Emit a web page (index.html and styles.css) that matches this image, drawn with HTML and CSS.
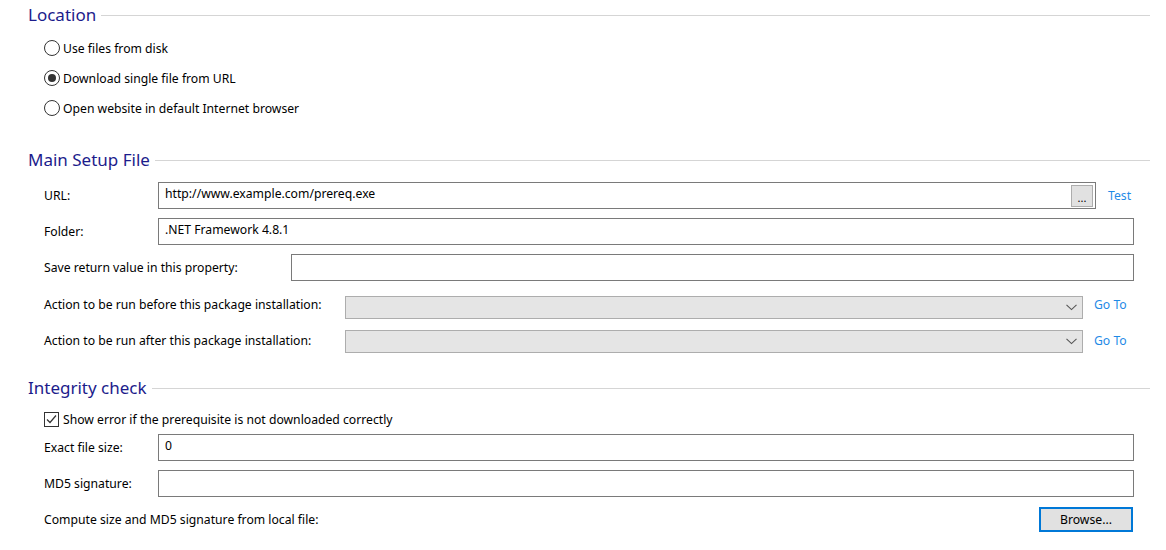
FILE: index.html
```html
<!DOCTYPE html>
<html>
<head>
<meta charset="utf-8">
<link rel="stylesheet" href="styles.css">
</head>
<body>
<div class="page">
  <div class="header"><span class="title">Location</span><span class="rule"></span></div>
  <div class="options">
    <label class="opt"><span class="radio"></span><span>Use files from disk</span></label>
    <label class="opt"><span class="radio on"></span><span>Download single file from URL</span></label>
    <label class="opt"><span class="radio"></span><span>Open website in default Internet browser</span></label>
  </div>

  <div class="header h2"><span class="title">Main Setup File</span><span class="rule"></span></div>
  <div class="row r-url">
    <span class="lbl w114">URL:</span>
    <div class="field"><span class="val">http://www.example.com/prereq.exe</span><span class="dots">...</span></div>
    <a class="link test">Test</a>
  </div>
  <div class="row r-gap9">
    <span class="lbl w114">Folder:</span>
    <div class="field"><span class="val">.NET Framework 4.8.1</span></div>
  </div>
  <div class="row r-gap9">
    <span class="lbl w247">Save return value in this property:</span>
    <div class="field"></div>
  </div>
  <div class="row sel r-act1">
    <span class="lbl w301">Action to be run before this package installation:</span>
    <div class="select"><svg class="chev" width="11" height="7" viewBox="0 0 11 7"><path d="M0.5 0.8 L5.5 5.6 L10.5 0.8" fill="none" stroke="#555" stroke-width="1.1"/></svg></div>
    <a class="link goto">Go To</a>
  </div>
  <div class="row sel r-act2">
    <span class="lbl w301">Action to be run after this package installation:</span>
    <div class="select"><svg class="chev" width="11" height="7" viewBox="0 0 11 7"><path d="M0.5 0.8 L5.5 5.6 L10.5 0.8" fill="none" stroke="#555" stroke-width="1.1"/></svg></div>
    <a class="link goto">Go To</a>
  </div>

  <div class="header h3"><span class="title">Integrity check</span><span class="rule"></span></div>
  <label class="row chk-row">
    <span class="check"><svg width="13" height="13" viewBox="0 0 13 13"><path d="M2 6.5 L5 9.5 L11 2.5" fill="none" stroke="#333" stroke-width="1.2"/></svg></span>
    <span>Show error if the prerequisite is not downloaded correctly</span>
  </label>
  <div class="row r-exact">
    <span class="lbl w114">Exact file size:</span>
    <div class="field"><span class="val">0</span></div>
  </div>
  <div class="row r-gap9">
    <span class="lbl w114">MD5 signature:</span>
    <div class="field"></div>
  </div>
  <div class="row r-browse">
    <span class="lbl">Compute size and MD5 signature from local file:</span>
    <button class="btn">Browse...</button>
  </div>
</div>
</body>
</html>
```

FILE: styles.css
```css
html, body {
  margin: 0;
  padding: 0;
  background: #ffffff;
}
body {
  font-family: "Noto Sans", "Open Sans", sans-serif;
  font-size: 12.2px;
  color: #000;
  width: 1166px;
  height: 550px;
  overflow: hidden;
}
.page {
  padding-top: 4px;
  display: flex;
  flex-direction: column;
}
.header {
  display: flex;
  align-items: center;
  height: 22px;
  padding-left: 28px;
  padding-right: 16px;
}
.header .title {
  font-size: 17px;
  line-height: 22px;
  color: #1c1c8c;
  margin-right: 5px;
}
.header .rule {
  flex: 1;
  height: 1px;
  background: #d5d5d5;
}
.h2 { margin-top: 26px; }
.h3 { margin-top: 24px; }

.options {
  margin-top: 7px;
  display: flex;
  flex-direction: column;
  padding-left: 44px;
}
.opt {
  height: 30px;
  display: flex;
  align-items: center;
}
.radio {
  width: 14px;
  height: 14px;
  border: 1px solid #333;
  border-radius: 50%;
  margin-right: 3px;
  display: flex;
  align-items: center;
  justify-content: center;
  box-sizing: content-box;
}
.radio.on::after {
  content: "";
  width: 8px;
  height: 8px;
  border-radius: 50%;
  background: #333;
}

.row {
  display: flex;
  align-items: center;
  padding-left: 44px;
  padding-right: 32px;
  height: 27px;
}
.r-url { margin-top: 11px; }
.r-gap9 { margin-top: 9px; }
.r-act1 { margin-top: 15px; }
.r-act2 { margin-top: 11px; }
.row.sel { height: 23px; }
.r-act1 .lbl, .r-act1 .goto { margin-bottom: 6px; }
.r-act2 .lbl, .r-act2 .goto { margin-bottom: 2px; }
.r-exact { margin-top: 6px; }
.r-browse { margin-top: 10px; height: 25px; justify-content: space-between; }

.lbl { flex: none; }
.w114 { width: 114px; }
.w247 { width: 247px; }
.w301 { width: 301px; }

.field {
  flex: 1;
  height: 27px;
  box-sizing: border-box;
  border: 1px solid #7a7a7a;
  background: #fff;
  display: flex;
  align-items: flex-start;
  padding: 3px 2px 0 6px;
}
.field .val {
  flex: 1;
  line-height: 16px;
}
.dots {
  width: 22px;
  height: 22px;
  box-sizing: border-box;
  margin-top: -1px;
  background: #e1e1e1;
  border: 1px solid #adadad;
  font-size: 11px;
  line-height: 24px;
  text-align: center;
  color: #000;
}
.link {
  color: #1f8ae6;
  flex: none;
  cursor: pointer;
}
.test {
  width: 38px;
  padding-left: 12px;
  box-sizing: border-box;
}
.goto {
  width: 51px;
  padding-left: 11px;
  box-sizing: border-box;
}
.select {
  flex: 1;
  height: 23px;
  box-sizing: border-box;
  border: 1px solid #adadad;
  background: #e5e5e5;
  display: flex;
  align-items: center;
  justify-content: flex-end;
  padding-right: 5px;
}
.chev { display: block; }

.chk-row {
  margin-top: 12px;
  height: 17px;
}
.check {
  width: 13px;
  height: 13px;
  border: 1px solid #333;
  margin-right: 4px;
  display: flex;
  align-items: center;
  justify-content: center;
}
.btn {
  width: 94px;
  height: 25px;
  margin-right: 1px;
  box-sizing: border-box;
  border: 2px solid #0078d7;
  background: #e1e1e1;
  font-family: inherit;
  font-size: 12.2px;
  color: #000;
  padding: 0;
}
```
